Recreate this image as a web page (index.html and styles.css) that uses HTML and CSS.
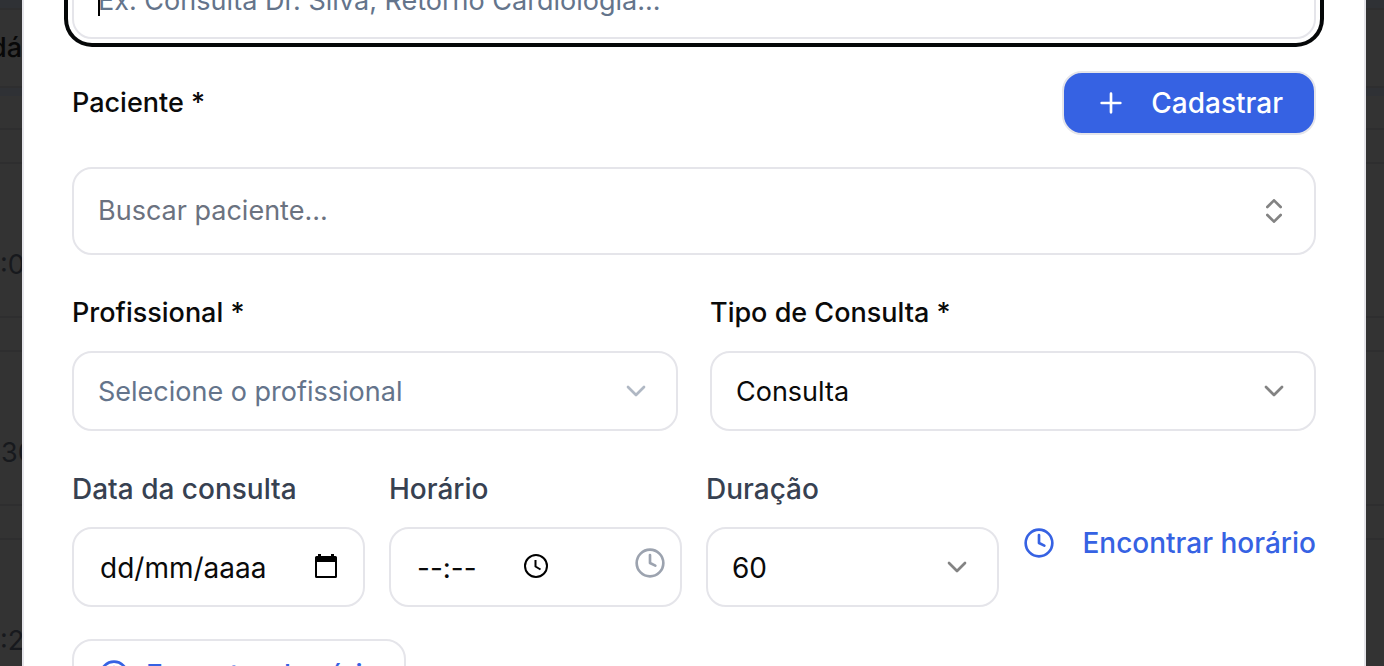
FILE: index.html
```html
<!DOCTYPE html>
<html lang="pt-BR">
<head>
<meta charset="utf-8">
<meta name="viewport" content="width=device-width, initial-scale=1">
<title>Nova consulta</title>
<link rel="stylesheet" href="styles.css">
</head>
<body>
<svg class="sprite" aria-hidden="true">
  <symbol id="clock" viewBox="0 0 24 24"><circle cx="12" cy="12" r="10"/><path d="M12 6v6l4 2"/></symbol>
  <symbol id="chevron" viewBox="0 0 24 24"><path d="m6 9 6 6 6-6"/></symbol>
  <symbol id="chevrons" viewBox="0 0 24 24"><path d="m7 15 5 5 5-5M7 9l5-5 5 5"/></symbol>
  <symbol id="plus" viewBox="0 0 24 24"><path d="M5 12h14M12 5v14"/></symbol>
</svg>
<div class="agenda" aria-hidden="true">
  <div class="row row-edge"></div>
  <div class="row row-head"><span class="day">dá</span></div>
  <div class="row row-tint"></div>
  <div class="row row-first"></div>
  <div class="row row-gap"></div>
  <div class="row row-slot"><span class="hour">:0</span></div>
  <div class="row row-gap"></div>
  <div class="row row-slot"><span class="hour hour-half">30</span></div>
  <div class="row row-gap"></div>
  <div class="row row-slot"><span class="hour">:2</span></div>
</div>
<main class="dialog">
  <form class="form">
    <div class="control">
      <input class="field field-focus" type="text" aria-label="Título" placeholder="Ex: Consulta Dr. Silva, Retorno Cardiologia...">
      <span class="caret"></span>
    </div>
    <div class="patient-head">
      <label class="label" for="paciente">Paciente *</label>
      <button class="btn btn-primary" type="button"><svg class="icon"><use href="#plus"/></svg>Cadastrar</button>
    </div>
    <button class="field combo" id="paciente" type="button">Buscar paciente...<svg class="icon half"><use href="#chevrons"/></svg></button>
    <div class="cols cols-two">
      <div class="group">
        <label class="label" for="profissional">Profissional *</label>
        <div class="control muted">
          <select class="field" id="profissional"><option>Selecione o profissional</option></select>
          <svg class="icon half pin"><use href="#chevron"/></svg>
        </div>
      </div>
      <div class="group">
        <label class="label" for="tipo">Tipo de Consulta *</label>
        <div class="control">
          <select class="field" id="tipo"><option>Consulta</option></select>
          <svg class="icon half pin"><use href="#chevron"/></svg>
        </div>
      </div>
    </div>
    <div class="cols cols-four">
      <div class="group">
        <label class="label label-soft" for="data">Data da consulta</label>
        <div class="control">
          <input class="field picker" id="data" type="text" placeholder="dd/mm/aaaa">
          <svg class="icon-small pin" viewBox="0 0 24 24"><path fill="currentColor" stroke="none" d="M4 0h3v2h10V0h3v2h1.500a1.500 1.500 0 0 1 1.500 1.500V22.500a1.500 1.500 0 0 1-1.500 1.500h-19A1.500 1.500 0 0 1 1 22.500V3.500A1.500 1.500 0 0 1 2.500 2H4zM3 8v14h18V8z" fill-rule="evenodd"/></svg>
        </div>
      </div>
      <div class="group">
        <label class="label label-soft" for="hora">Horário</label>
        <div class="control">
          <input class="field picker" id="hora" type="text" placeholder="--:--">
          <svg class="icon-small pin pin-time" viewBox="0 0 24 24"><circle cx="12" cy="12" r="11"/><path d="M11.500 6v6.500l5 3"/></svg>
          <svg class="icon pin pin-clock"><use href="#clock"/></svg>
        </div>
      </div>
      <div class="group">
        <label class="label label-soft" for="duracao">Duração</label>
        <div class="control">
          <select class="field field-number" id="duracao"><option>60</option></select>
          <svg class="icon half pin"><use href="#chevron"/></svg>
        </div>
      </div>
      <button class="btn btn-link" type="button"><svg class="icon"><use href="#clock"/></svg>Encontrar horário</button>
    </div>
    <button class="btn btn-outline" type="button"><svg class="icon"><use href="#clock"/></svg>Encontrar horário</button>
  </form>
</main>
</body>
</html>
```
FILE: styles.css
```css
* { box-sizing: border-box; }
html, body { height: 100%; }
body {
  margin: 0;
  position: relative;
  overflow: hidden;
  background: #333;
  color: #0a0a0a;
  font: 400 27px/40px Inter, "Noto Sans", sans-serif;
}
button, input, select { font: inherit; color: inherit; margin: 0; }
.sprite { display: none; }

/* Dimmed agenda behind the dialog */
.agenda { position: absolute; inset: 0; overflow: hidden; color: #17191d; }
.row { display: flex; align-items: center; border-bottom: 2px solid #2e2e2f; overflow: hidden; }
.row-edge { height: 10px; background: #2f3135; }
.row-head { height: 78px; color: #080808; font-weight: 500; }
.row-tint { height: 8px; background: #2f3135; border: 0; }
.row-first { height: 34px; }
.row-gap { height: 34px; }
.row-slot { height: 154px; padding-top: 50px; }
.day { display: flex; justify-content: flex-end; width: 22px; }
.hour-half { padding-left: 1px; }

.dialog {
  position: relative;
  min-height: calc(100% + 92px);
  margin: -92px 18px 0 22px;
  padding: 49px 48px;
  border: 2px solid #e4e4e9;
  background: #fff;
}
.form { display: flex; flex-direction: column; }
.control { position: relative; display: flex; }
.field {
  width: 100%;
  height: 80px;
  padding: 2px 24px 0;
  border: 2px solid #e5e5ea;
  border-radius: 20px;
  background: #fff;
  outline: 0;
  appearance: none;
  text-align: left;
}
.field::placeholder { color: #64748b; opacity: 1; }
.field-focus { box-shadow: 0 0 0 4px #fff, 0 0 0 8px #050708; }
.caret { position: absolute; left: 26px; top: 24px; width: 2px; height: 33px; background: #000; }
.picker { padding: 2px 26px 0; font-size: 28px; }
.picker::placeholder { color: #0a0a0a; }
.field-number { font-size: 28px; }
.muted { color: #64748b; }

.icon, .icon-small {
  flex: none;
  width: 32px;
  height: 32px;
  fill: none;
  stroke: currentColor;
  stroke-width: 2;
  stroke-linecap: round;
  stroke-linejoin: round;
}
.icon-small { width: 24px; height: 24px; color: #000; stroke-linecap: butt; }
.half { opacity: .5; }
.pin { position: absolute; right: 26px; top: 24px; pointer-events: none; }
.icon-small.pin { right: 27px; top: 27px; }
.icon-small.pin-time { right: 134px; }
.pin-clock.pin { right: 16px; top: 20px; color: #9ca3af; }

.label { font-weight: 500; line-height: 28px; white-space: nowrap; }
.label-soft { color: #374151; font-size: 28px; }
.patient-head { display: flex; align-items: center; justify-content: space-between; margin: 32px 0; }
.combo { display: flex; align-items: center; justify-content: space-between; height: 88px; padding-top: 0; color: #6b7280; }
.combo .icon { color: #0a0a0a; }
.cols { display: grid; margin-top: 44px; }
.cols-two { grid-template-columns: repeat(2, minmax(0, 1fr)); gap: 32px; }
.cols-four { grid-template-columns: repeat(4, minmax(0, 1fr)); gap: 24px; }
.group { display: flex; flex-direction: column; gap: 24px; }

.btn { display: flex; align-items: center; border: 0; background: none; font-size: 28px; font-weight: 500; white-space: nowrap; }
.btn-primary {
  gap: 24px;
  height: 64px;
  padding: 0 31px;
  border: 2px solid #e5e5ea;
  border-radius: 20px;
  background: #3662e3;
  color: #fff;
}
.btn-link { align-self: center; justify-content: space-between; padding: 4px 0 0; color: #3662e3; }
.btn-outline {
  align-self: flex-start;
  gap: 16px;
  height: 72px;
  margin-top: 32px;
  padding: 0 24px;
  border: 2px solid #e5e5ea;
  border-radius: 20px;
  color: #3662e3;
}
```
